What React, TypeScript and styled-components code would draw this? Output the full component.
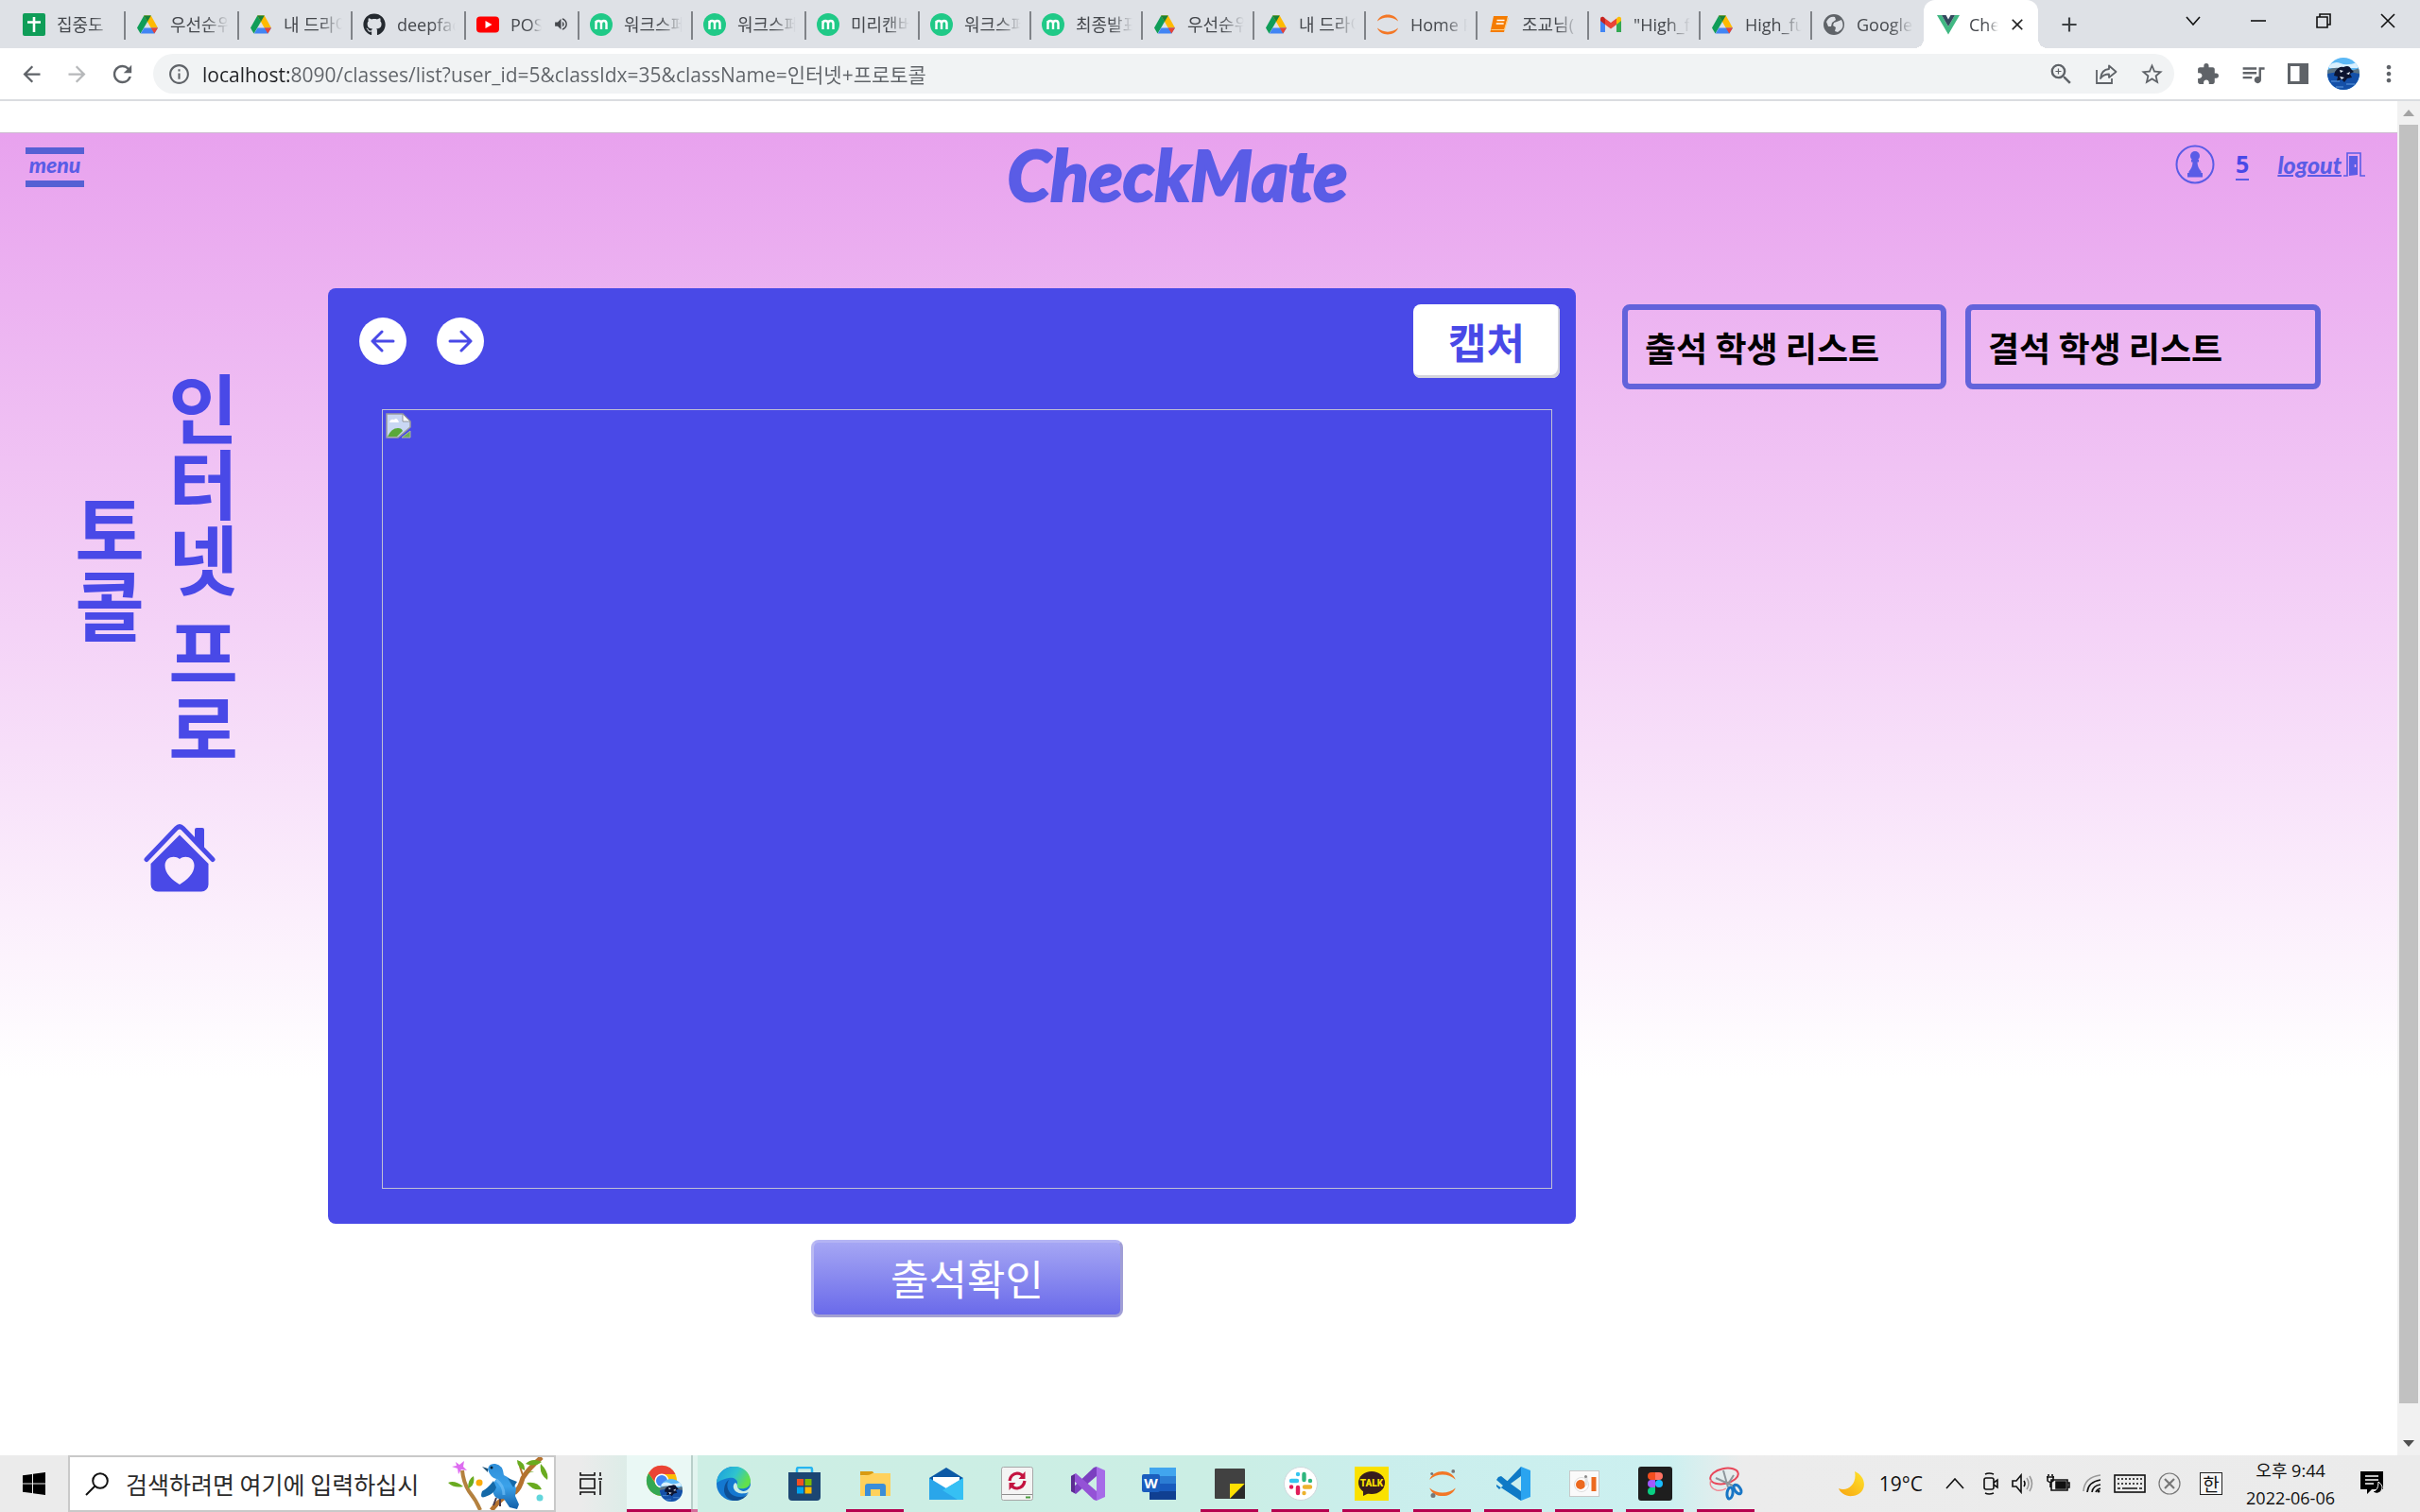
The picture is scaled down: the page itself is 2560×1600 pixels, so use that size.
import React from "react";
import styled, { createGlobalStyle, css } from "styled-components";
import { FaGithub } from "react-icons/fa";
import {
  MdExtension,
  MdQueueMusic,
  MdStarBorder,
  MdZoomIn,
  MdRefresh,
  MdArrowBack,
  MdArrowForward,
  MdInfoOutline,
  MdVolumeUp,
  MdPublic,
  MdMoreVert,
  MdClose,
  MdAdd,
} from "react-icons/md";

const sans = `"Open Sans", "Noto Sans CJK KR", sans-serif`;
const korean = `"Noto Sans CJK KR", "Noto Sans", sans-serif`;
const indigo = "#4949e7";
const brand = "#5a5ce6";

const GlobalStyle = createGlobalStyle`
  *, *::before, *::after { box-sizing: border-box; }
  html, body { margin: 0; padding: 0; }
  body { font-family: ${sans}; background: #fff; color: #202124; }
  button { font: inherit; border: 0; padding: 0; margin: 0; background: none; color: inherit; cursor: pointer; }
  input { font: inherit; border: 0; padding: 0; margin: 0; background: none; outline: none; }
  h1, h2, p { margin: 0; }
  a { color: inherit; text-decoration: none; }
  svg { display: block; flex: none; }
`;

const Shell = styled.div`
  display: flex;
  flex-direction: column;
  height: 100vh;
  overflow: hidden;
`;

/* ---------- browser tabs ---------- */

const TabStrip = styled.nav`
  display: flex;
  height: 51px;
  padding-left: 13px;
  background: #dee1e6;
  flex: none;
`;

const TabButton = styled.button<{ $width: number; $active?: boolean; $divider?: boolean }>`
  position: relative;
  display: flex;
  align-items: center;
  gap: 12px;
  flex: 0 1 ${(p) => p.$width}px;
  min-width: 0;
  padding: 0 11px;
  color: #45484d;
  font-size: 18px;
  ${(p) =>
    p.$divider &&
    css`
      &::after {
        content: "";
        position: absolute;
        right: 0;
        top: 12px;
        width: 2px;
        height: 30px;
        background: #808388;
      }
    `}
  ${(p) =>
    p.$active &&
    css`
      background: #fff;
      border-radius: 12px 12px 0 0;
      gap: 10px;
      padding: 0 12px 0 14px;
      &::before,
      &::after {
        content: "";
        position: absolute;
        bottom: 0;
        width: 10px;
        height: 10px;
      }
      &::before {
        left: -10px;
        background: radial-gradient(circle at 0 0, transparent 10px, #fff 10px);
      }
      &::after {
        right: -10px;
        background: radial-gradient(circle at 100% 0, transparent 10px, #fff 10px);
      }
    `}
`;

const TabTitle = styled.span`
  flex: 1;
  min-width: 0;
  overflow: hidden;
  white-space: nowrap;
  text-align: left;
  line-height: 26px;
  mask-image: linear-gradient(to right, #000 60%, transparent);
`;

const NewTab = styled.button`
  display: grid;
  place-items: center;
  width: 50px;
  margin-left: 8px;
  color: #3c4043;
`;

const WindowButtons = styled.div`
  display: flex;
  margin-left: auto;
`;

const WindowButton = styled.button`
  display: grid;
  place-items: center;
  width: 69px;
  height: 44px;
  &:last-child {
    width: 68px;
  }
`;

/* ---------- address bar ---------- */

const AddressRow = styled.div`
  display: flex;
  align-items: center;
  height: 56px;
  padding: 0 9px;
  border-bottom: 2px solid #dadce0;
  background: #fff;
  color: #5f6368;
  flex: none;
`;

const IconButton = styled.button<{ $faded?: boolean }>`
  display: grid;
  place-items: center;
  width: 48px;
  height: 42px;
  opacity: ${(p) => (p.$faded ? 0.45 : 1)};
`;

const Omnibox = styled.form`
  display: flex;
  align-items: center;
  flex: 1;
  height: 42px;
  margin: 0 0 0 9px;
  padding: 0 0 0 15px;
  border-radius: 21px;
  background: #f1f3f4;
`;

const UrlInput = styled.input`
  flex: 1;
  min-width: 0;
  height: 36px;
  margin-left: 12px;
  font-family: ${sans};
  font-size: 21px;
  background: linear-gradient(to right, #202124 92px, #5f6368 92px);
  background-clip: text;
  -webkit-background-clip: text;
  -webkit-text-fill-color: transparent;
`;

const Actions = styled.div`
  display: flex;
  align-items: center;
  margin-left: 11px;
`;

/* ---------- page ---------- */

const Viewport = styled.div`
  display: flex;
  flex: 1;
  min-height: 0;
`;

const Page = styled.main`
  flex: 1;
  min-width: 0;
  padding-top: 33px;
  overflow: hidden;
`;

const Stage = styled.div`
  border-top: 1px solid #cdb9d0;
  min-height: 100%;
  background: linear-gradient(to bottom, #e8a2ee 0, #fff 1000px);
`;

const Header = styled.header`
  display: grid;
  grid-template-columns: 1fr auto 1fr;
  align-items: start;
  padding: 12px 34px 0 27px;
  height: 164px;
`;

const MenuButton = styled.button`
  justify-self: start;
  width: 62px;
  height: 42px;
  margin-top: 3px;
  padding-bottom: 6px;
  border-top: 7px solid #5560d4;
  border-bottom: 7px solid #5560d4;
  color: ${brand};
  font-family: Lato, sans-serif;
  font-size: 23px;
  font-style: italic;
  font-weight: 900;
  line-height: 22px;
`;

const Logo = styled.a`
  padding-right: 38px;
  color: ${brand};
  font-family: Lato, sans-serif;
  font-size: 74px;
  font-style: italic;
  font-weight: 900;
  line-height: 64px;
  -webkit-text-stroke: 2px ${brand};
`;

const Account = styled.div`
  display: flex;
  align-items: center;
  justify-self: end;
  height: 42px;
  color: ${brand};
`;

const UserLink = styled.a`
  margin: 0 30px 0 22px;
  border-bottom: 2px solid ${brand};
  color: ${indigo};
  font-size: 25px;
  font-weight: 700;
  line-height: 32px;
`;

const LogoutLink = styled.a`
  display: flex;
  align-items: center;
  gap: 2px;
  font-family: Lato, sans-serif;
  font-size: 25px;
  font-style: italic;
  font-weight: 900;
  line-height: 30px;
  span {
    text-decoration: underline;
    text-decoration-thickness: 2px;
  }
`;

const Columns = styled.div`
  display: grid;
  grid-template-columns: 347fr 1320fr 869fr;
  align-items: start;
`;

const Side = styled.aside`
  display: flex;
  flex-direction: column;
  align-items: center;
  gap: 50px;
  padding: 77px 0 0 33px;
  color: ${indigo};
`;

const ClassTitle = styled.h1`
  height: 440px;
  margin-right: 50px;
  writing-mode: vertical-rl;
  text-align: center;
  font-family: ${korean};
  font-size: 80px;
  font-weight: 700;
  line-height: 99px;
`;

const Panel = styled.section`
  padding: 17px 17px 37px 33px;
  border-radius: 8px;
  background: ${indigo};
`;

const PanelBar = styled.div`
  display: flex;
  align-items: center;
  gap: 32px;
`;

const RoundButton = styled.button`
  display: grid;
  place-items: center;
  width: 50px;
  height: 50px;
  border-radius: 50%;
  background: #fff;
  color: ${indigo};
`;

const CaptureButton = styled.button`
  width: 155px;
  height: 78px;
  margin-left: auto;
  border-radius: 8px;
  background: #fff;
  box-shadow: inset -2px -3px 0 #d4d4dc;
  color: ${indigo};
  font-family: ${korean};
  font-size: 44px;
  font-weight: 700;
  line-height: 70px;
`;

const Capture = styled.div`
  margin: 33px 8px 0 24px;
  padding: 3px;
  border: 1px solid #c0c0d4;
  aspect-ratio: 3 / 2;
`;

const CheckRow = styled.div`
  display: flex;
  justify-content: center;
  padding: 17px 25px 0 57px;
`;

const CheckButton = styled.button`
  width: 330px;
  height: 82px;
  padding-bottom: 3px;
  border: 3px solid;
  border-color: #b4b4f4 #a09ed6 #a3a0d2 #b9b9f2;
  border-radius: 8px;
  background: linear-gradient(to bottom, #a5a6f4, #6a6aea);
  color: #fff;
  font-family: ${korean};
  font-size: 44px;
  line-height: 70px;
`;

const Lists = styled.section`
  display: grid;
  grid-template-columns: 343fr 376fr;
  gap: 20px;
  padding: 17px 81px 0 49px;
`;

const ListBox = styled.div`
  padding: 0 18px;
  border: 6px solid #6363db;
  border-radius: 8px;
`;

const ListTitle = styled.h2`
  color: #000;
  font-family: ${korean};
  font-size: 36px;
  font-weight: 700;
  line-height: 78px;
  white-space: nowrap;
`;

const Scrollbar = styled.div`
  display: flex;
  flex-direction: column;
  width: 24px;
  padding: 0 2px;
  background: #f1f1f1;
`;

const ScrollArrow = styled.button`
  display: grid;
  place-items: center;
  height: 25px;
  flex: none;
`;

const ScrollThumb = styled.div`
  flex: 1353;
  background: #c1c1c1;
`;

const ScrollRest = styled.div`
  flex: 30;
`;

/* ---------- taskbar ---------- */

const Taskbar = styled.footer`
  display: flex;
  height: 60px;
  flex: none;
  background: linear-gradient(
    to right,
    #ebebeb 0,
    #ebebeb 24%,
    #cdeee4 28%,
    #cbeee4 50%,
    #caeeec 57%,
    #ccf0f0 69%,
    #ececec 72%,
    #ebebeb 100%
  );
`;

const StartButton = styled.button`
  display: grid;
  place-items: center;
  width: 72px;
`;

const SearchBox = styled.form`
  display: flex;
  align-items: center;
  width: 516px;
  padding-left: 16px;
  border: 2px solid #c9c9c9;
  background: #fff;
`;

const SearchInput = styled.input`
  flex: 1;
  min-width: 0;
  height: 48px;
  margin-left: 18px;
  font-family: ${korean};
  font-size: 25px;
  &::placeholder {
    color: #2b2b2b;
    opacity: 1;
  }
`;

const AppButton = styled.button<{ $open?: boolean; $active?: boolean }>`
  position: relative;
  display: grid;
  place-items: center;
  width: 75px;
  ${(p) =>
    p.$active &&
    css`
      background: linear-gradient(to right, #eaf8f5 68px, #b9cfca 68px, #b9cfca 70px, #e2f4ef 70px);
    `}
  ${(p) =>
    (p.$open || p.$active) &&
    css`
      &::after {
        content: "";
        position: absolute;
        left: ${p.$active ? 0 : 7}px;
        right: ${p.$active ? 0 : 7}px;
        bottom: 0;
        height: 3px;
        background: ${p.$active ? "linear-gradient(to right, #b5004f 68px, #d56c9b 68px)" : "#b5004f"};
      }
    `}
`;

const Tray = styled.div`
  display: flex;
  align-items: center;
  margin-left: auto;
  padding-right: 38px;
  color: #111;
`;

const Weather = styled.button`
  display: flex;
  align-items: center;
  gap: 15px;
  margin-right: 24px;
  font-size: 21px;
`;

const TrayIcons = styled.div`
  display: flex;
  align-items: center;
  gap: 13px;
`;

const Language = styled.button`
  width: 24px;
  height: 24px;
  margin: 0 25px 0 20px;
  border: 1px solid #222;
  background: #f6f6f6;
  font-family: ${korean};
  font-size: 19px;
  line-height: 20px;
`;

const Clock = styled.button`
  margin-right: 27px;
  padding-top: 2px;
  font-size: 18px;
  line-height: 29px;
  text-align: center;
`;

/* ---------- favicons ---------- */

const SheetsIcon = () => (
  <svg width="24" height="24" viewBox="0 0 24 24">
    <rect width="24" height="24" rx="2" fill="#0f9d58" />
    <path d="M12 4v16M5 9.500h14" stroke="#fff" strokeWidth="2.600" />
  </svg>
);

const DriveIcon = () => (
  <svg width="24" height="24" viewBox="0 0 24 24">
    <path d="M8.300 2.500h7.400L7 17.500 4.500 21.500 1 15.500z" fill="#0f9d58" />
    <path d="M8.300 2.500h7.400L23 15.500h-7.300z" fill="#ffba00" />
    <path d="M4.800 21.500 8.500 15.500H23l-3.700 6z" fill="#4285f4" />
    <path d="M19.300 21.500 15.700 15.500H23z" fill="#ea4335" />
    <path d="M12 9 8.300 2.500h7.400z" fill="#188038" />
  </svg>
);

const YoutubeIcon = () => (
  <svg width="24" height="24" viewBox="0 0 24 24">
    <rect y="3.500" width="24" height="17" rx="4" fill="#f00" />
    <path d="M9.500 8v8l7-4z" fill="#fff" />
  </svg>
);

const MiroIcon = () => (
  <svg width="24" height="24" viewBox="0 0 24 24">
    <circle cx="12" cy="12" r="12" fill="#20c987" />
    <path
      d="M6.500 17V8M6.500 11c0-4 5.500-4 5.500 0v6M12 11c0-4 5.500-4 5.500 0v6"
      fill="none"
      stroke="#fff"
      strokeWidth="2.400"
    />
  </svg>
);

const JupyterIcon = ({ size = 24, dots = false }: { size?: number; dots?: boolean }) => (
  <svg width={size} height={size} viewBox="0 0 24 24">
    <path d="M1 8.500C4-.8 20-.8 23 8.500 17 3 7 3 1 8.500z" fill="#f37726" />
    <path d="M1 15.500c3 9.300 19 9.300 22 0-6 5.500-16 5.500-22 0z" fill="#f37726" />
    {dots && (
      <g fill="#767677">
        <circle cx="21" cy="1.500" r="1.500" />
        <circle cx="3" cy="3.500" r="1.200" />
        <circle cx="4" cy="22" r="2" />
      </g>
    )}
  </svg>
);

const BookIcon = () => (
  <svg width="24" height="24" viewBox="0 0 24 24">
    <path d="M6 3h15l-4 17H2.500z" fill="#f57c00" />
    <path d="M9.500 7.500h8M8.700 11h8" stroke="#fff" strokeWidth="1.500" />
    <path d="M3.500 17.500h14L21.500 5" fill="none" stroke="#ffcc80" strokeWidth="1.200" />
  </svg>
);

const GmailIcon = () => (
  <svg width="24" height="24" viewBox="0 0 24 24">
    <path d="M1 6v14h5V10z" fill="#4285f4" />
    <path d="M23 6v14h-5V10z" fill="#34a853" />
    <path d="M18 5.500V12l5-4V6c0-2.500-3-3-5-.5z" fill="#fbbc04" />
    <path d="M6 5.500 12 10l6-4.500V12l-6 4.500L6 12z" fill="#ea4335" />
    <path d="M1 6v2l5 4V5.500C4 3 1 3.500 1 6z" fill="#c5221f" />
  </svg>
);

const GlobeIcon = () => (
  <svg width="24" height="24" viewBox="0 0 24 24">
    <circle cx="12" cy="12" r="11" fill="#5f6368" />
    <path d="M4 9q3-6 9-5l1 3-4 3-1 4-3 0zM15 9l5-2q3 6 0 10l-4 3-3-1 1-4-3-2 1-3z" fill="#dee1e6" />
  </svg>
);

const VueIcon = () => (
  <svg width="24" height="24" viewBox="0 0 24 24">
    <path d="M0 2h5l7 12 7-12h5L12 22.500z" fill="#41b883" />
    <path d="M5 2h4.500L12 6.500 14.500 2H19l-7 12z" fill="#34495e" />
  </svg>
);

/* ---------- toolbar and page drawings ---------- */

const ShareIcon = () => (
  <svg width="24" height="24" viewBox="0 0 24 24" fill="none" stroke="currentColor" strokeWidth="1.800">
    <path d="M2 8v14h16v-5" />
    <path d="M15 3.500 22.500 10 15 16v-3.500c-4.500 0-7 1.500-9 4.500.5-5.500 3.500-9.500 9-10z" strokeLinejoin="round" />
  </svg>
);

const SidePanelIcon = () => (
  <svg width="22" height="22" viewBox="0 0 22 22" fill="none" stroke="currentColor">
    <rect x="1.500" y="1.500" width="19" height="19" strokeWidth="3" />
    <path d="M16 1v20" strokeWidth="7" />
  </svg>
);

const AvatarIcon = ({ size }: { size: number }) => (
  <svg width={size} height={size} viewBox="0 0 34 34">
    <defs>
      <clipPath id={`avatar-${size}`}>
        <circle cx="17" cy="17" r="17" />
      </clipPath>
    </defs>
    <g clipPath={`url(#avatar-${size})`}>
      <rect width="34" height="34" fill="#5cb8f5" />
      <path d="M2 8q6-5 12-2t18-1v6H2z" fill="#d9f0ff" />
      <path d="M0 13q9-4 17-1t17-1v9H0z" fill="#5b7486" />
      <path d="M0 17q17-4 34 0v17H0z" fill="#1450a8" />
      <path d="M8 15q4-6 9-5 6-3 8 2l3 3-4 2 2 4-5 1-3 4-3-3-5 2 1-5-4-1z" fill="#0c1430" />
      <path d="M13 13l4 1-3 2zM20 17l4-2-1 3zM13 20l5 1-3 2z" fill="#e8f1fa" />
      <path d="M4 25h9M20 28h9M9 31h8" stroke="#5e9be0" />
    </g>
  </svg>
);

const PawnIcon = () => (
  <svg width="42" height="42" viewBox="0 0 42 42" fill={brand}>
    <circle cx="21" cy="21" r="19.500" fill="none" stroke={brand} strokeWidth="2" />
    <circle cx="21" cy="12" r="5" />
    <path d="M17 16h8v2.500h-1.500c0 4 1.500 7 4 10v1.500h1.500v4.500H13V30h1.500v-1.500c2.500-3 4-6 4-10H17z" />
  </svg>
);

const DoorIcon = () => (
  <svg width="23" height="28" viewBox="0 0 23 28" fill="none" stroke={brand} strokeWidth="1.600">
    <path d="M0 26h4V2h14v24h5" />
    <path d="M6 5l9 0v20l-9 1z" fill={brand} stroke="none" />
    <path d="M12.500 14v3" stroke="#eaa9ef" />
  </svg>
);

const HouseIcon = () => (
  <svg width="76" height="72" viewBox="0 0 76 72" fill="currentColor">
    <path d="M54 6a2 2 0 0 1 2-2h6a2 2 0 0 1 2 2v22L54 19z" />
    <path d="M3 37.500 34.500 4.500q3.500-3.500 7 0L73 37.500" fill="none" stroke="currentColor" strokeWidth="5" strokeLinecap="round" />
    <path
      fillRule="evenodd"
      d="M38 11.500 68.500 42v22a7.500 7.500 0 0 1-7.500 7.500H15A7.500 7.500 0 0 1 7.500 64V42zM38 64c8-5 15.500-11.500 15.500-20 0-9-10-11.500-15.500-7-5.500-4.500-15.500-2-15.500 7 0 8.500 7.500 15 15.500 20z"
    />
  </svg>
);

const ArrowIcon = ({ right }: { right?: boolean }) => (
  <svg width="26" height="26" viewBox="0 0 26 26" fill="none" stroke="currentColor" strokeWidth="3" strokeLinecap="round" strokeLinejoin="round">
    {right ? <path d="M2 13h22M14 3l10 10-10 10" /> : <path d="M24 13H2M12 3 2 13l10 10" />}
  </svg>
);

const BrokenImageIcon = () => (
  <svg width="27" height="27" viewBox="0 0 27 27">
    <path d="M1 1h17l8 8v6L13 26H1z" fill="#c9d7f3" stroke="#9a9da0" strokeWidth="1.500" />
    <path d="M18 1v8h8z" fill="#fff" stroke="#8f9498" />
    <path d="M4 10q1-4 5-3 3-3 5 3z" fill="#fff" />
    <path d="M2 25q4-9 11-9 4 0 5 3l-6 6z" fill="#5aa83a" />
    <path d="M17 26l9-7v7z" fill="#6bae55" stroke="#a9b5a0" />
  </svg>
);

/* ---------- taskbar drawings ---------- */

const WindowsIcon = () => (
  <svg width="24" height="24" viewBox="0 0 24 24">
    <path d="M0 3.300 10 2v9.500H0zM11 1.800 24 0v11.500H11zM0 12.500h10V22L0 20.700zM11 12.500h13V24l-13-1.800z" />
  </svg>
);

const SearchIcon = () => (
  <svg width="25" height="25" viewBox="0 0 25 25" fill="none" stroke="#111" strokeWidth="2">
    <circle cx="16" cy="9" r="7.800" />
    <path d="M10.500 14.500 1 24" />
  </svg>
);

const BirdIcon = () => (
  <svg width="112" height="56" viewBox="0 0 112 56">
    <defs>
      <linearGradient id="bird" x1="0" y1="0" x2="0" y2="1">
        <stop offset="0" stopColor="#2f8ed8" />
        <stop offset=".5" stopColor="#3ba2ea" />
        <stop offset="1" stopColor="#125fa8" />
      </linearGradient>
    </defs>
    <path d="M15 14q1 12 7 22 8 10 12 20" fill="none" stroke="#b4813f" strokeWidth="4" />
    <path d="M46 56q10-14 25-19 5-4 8-15 6-10 20-22" fill="none" stroke="#b4722f" strokeWidth="5" />
    <path d="M80 22 76 10" stroke="#b4722f" strokeWidth="2" />
    <path d="M0 27q7-3 16 4-10 2-16-4zM21 33q0-10 6-13 2 10-6 13zM73 3q9 3 8 11-8-3-8-11zM82 7q7-7 17-2-7 6-17 2zM98 7q9 9 7 17-9-6-7-17zM83 27q12-2 16 7-9 2-16-7zM83 16q5 1 8-1" fill="#6aab20" />
    <path d="M8 5l4 3 5-4-1 6 4 4-6-1-3 5-1-6-6-2 5-1z" fill="#dd6cf0" />
    <circle cx="33" cy="27" r="3.500" fill="#fbaa0a" />
    <circle cx="97" cy="43" r="3.500" fill="#63d6dc" />
    <path d="M55 44v8M51 43l-3 8" stroke="#4a3a4a" strokeWidth="2" />
    <path d="M42 13q1-7 8-6 8 1 9 12 10 4 13 14l-1 8 4 9-2 5-8-2-6-9q-12 2-12-12 0-4 4-9-6-1-9-10z" fill="url(#bird)" />
    <path d="M42 12 36 10l6 6z" fill="#1c4f73" />
    <path d="M48 25q-6 8-12 11-3 8 3 6 10-3 12-10zM63 22l10 4-4 6z" fill="#1469a8" />
    <circle cx="46" cy="11" r="1.500" fill="#062035" />
    <path d="M51 24q8 6 8 16" stroke="#79c5fa" strokeWidth="3" fill="none" opacity=".6" />
  </svg>
);

const TaskViewIcon = () => (
  <svg width="25" height="24" viewBox="0 0 25 24" fill="none" stroke="#111" strokeWidth="1.600">
    <path d="M1 7h15v10H1zM1 0v3h15V0M1 24v-3h15v3M22 0v4M22 9v15M20 7h4" />
  </svg>
);

const ChromeIcon = () => (
  <svg width="44" height="40" viewBox="-4 0 44 40">
    <circle cx="17" cy="17" r="16" fill="#fbbc05" />
    <path d="M3 9A16 16 0 0 1 31.500 10H17a7 7 0 0 0-6.500 9z" fill="#ea4335" />
    <path d="M3 9a16 16 0 0 0 13 24l7-13a7 7 0 0 1-12.500 0z" fill="#34a853" />
    <circle cx="17" cy="17" r="7.500" fill="#fff" />
    <circle cx="17" cy="17" r="6" fill="#4285f4" />
    <g transform="translate(15 15)">
      <AvatarIcon size={24} />
    </g>
  </svg>
);

const EdgeIcon = () => (
  <svg width="36" height="36" viewBox="0 0 36 36">
    <defs>
      <linearGradient id="edge-top" x1="0" y1="0" x2="1" y2=".4">
        <stop offset="0" stopColor="#1a9be0" />
        <stop offset=".6" stopColor="#2fc3cf" />
        <stop offset="1" stopColor="#62e04c" />
      </linearGradient>
    </defs>
    <circle cx="18" cy="18" r="18" fill="#1478d0" />
    <path d="M0 17C2-5 34-6 36 15c0 7-6 9-12 8-4-1-2-3-2-6 0-4-5-6-9-5C7 13 2 16 0 17z" fill="url(#edge-top)" />
    <path d="M13 14c-5 9 2 19 13 18 4 0 6-2 8-4-8 12-24 10-26-2 0-6 2-10 5-12z" fill="#0d4f95" />
    <path d="M36 20c-2 6-9 8-16 4 0 3 8 6 14 3l2 3v-5z" fill="#cdeee6" />
    <path d="M20 17c-3 2-3 6 0 9 5 4 11 2 14 0-5 1-10-1-11-3-2-2 0-4-3-6z" fill="#cdeee6" />
  </svg>
);

const StoreIcon = () => (
  <svg width="36" height="36" viewBox="0 0 36 36">
    <path d="M10 7V3q0-2 2-2h12q2 0 2 2v4" fill="none" stroke="#27b5f0" strokeWidth="2.500" />
    <path d="M1 6h34v26q0 4-4 4H5q-4 0-4-4z" fill="#1c4673" />
    <path d="M10 13h7v7h-7z" fill="#f25022" />
    <path d="M18.500 13h7v7h-7z" fill="#7fba00" />
    <path d="M10 21.500h7v7h-7z" fill="#00a4ef" />
    <path d="M18.500 21.500h7v7h-7z" fill="#ffb900" />
  </svg>
);

const FolderIcon = () => (
  <svg width="34" height="28" viewBox="0 0 34 28">
    <path d="M1 1h13l3 4H1z" fill="#d99b12" />
    <path d="M1 5q9 1 13-2h19v24H1z" fill="#ffd15c" />
    <path d="M6 27V17q0-3 3-3h16q3 0 3 3v10h-6v-7H12v7z" fill="#3a8ed8" />
  </svg>
);

const MailIcon = () => (
  <svg width="36" height="34" viewBox="0 0 36 34">
    <path d="M0 11 18 0l18 11v3H0z" fill="#0d5aa6" />
    <path d="M4 10h28v14H4z" fill="#fff" />
    <path d="M0 11l18 11 18-11v23H0z" fill="#2aa6ea" />
    <path d="M36 11 14 24l16 10h6z" fill="#36c0f4" />
  </svg>
);

const SyncIcon = () => (
  <svg width="34" height="36" viewBox="0 0 34 36">
    <rect x=".5" y=".5" width="33" height="35" rx="2" fill="#f4f4f4" stroke="#a7a7a7" />
    <path d="M1 29.500h32" stroke="#8f8f8f" />
    <path d="M26 32.500h5" stroke="#4c9d3f" strokeWidth="2" />
    <path d="M9 15q1-7 8-8 4 0 7 4M25 15q-1 7-8 8-4 0-7-4" fill="none" stroke="#c3123f" strokeWidth="3.200" />
    <path d="M25.500 5v8h-7zM8.500 25v-8h7z" fill="#c3123f" />
  </svg>
);

const VisualStudioIcon = () => (
  <svg width="36" height="36" viewBox="0 0 36 36">
    <path d="M27 0l9 4v28l-9 4z" fill="#a66be8" />
    <path d="M27 0v10L5 29l-5-3 1-3L24 1z" fill="#7b3fc0" />
    <path d="M27 36V26L5 7 0 10l1 3 23 22z" fill="#9452d6" />
    <path d="M0 10l4-2v20l-4-2z" fill="#5c2d91" />
  </svg>
);

const WordIcon = () => (
  <svg width="36" height="34" viewBox="0 0 36 34">
    <path d="M8 0h28v9H8z" fill="#41a5ee" />
    <path d="M8 9h28v8H8z" fill="#2b7cd3" />
    <path d="M8 17h28v8H8z" fill="#185abd" />
    <path d="M8 25h28v9H8z" fill="#103f91" />
    <rect y="7" width="19" height="19" rx="2" fill="#1a5dbe" />
    <text x="9.500" y="22" textAnchor="middle" fill="#fff" fontFamily="Open Sans, sans-serif" fontWeight="700" fontSize="15">W</text>
  </svg>
);

const NotesIcon = () => (
  <svg width="32" height="32" viewBox="0 0 32 32">
    <rect width="32" height="32" rx="1" fill="#414141" />
    <path d="M16 16h16L16 32z" fill="#ffdf00" />
    <path d="M32 16v16H16z" fill="#2a2a2a" />
  </svg>
);

const SlackIcon = () => (
  <svg width="36" height="36" viewBox="0 0 36 36" strokeWidth="4.400" strokeLinecap="round">
    <circle cx="18" cy="18" r="17.500" fill="#fff" stroke="#cfd8dc" strokeWidth="1" />
    <path d="M8 15h6M15 8v.1" stroke="#36c5f0" />
    <path d="M21.500 8v6M28 15h-.1" stroke="#2eb67d" />
    <path d="M28 21.500h-6M21.500 28v-.1" stroke="#ecb22e" />
    <path d="M15 28v-6M8 21.500h.1" stroke="#e01e5a" />
  </svg>
);

const TalkIcon = () => (
  <svg width="36" height="36" viewBox="0 0 36 36">
    <rect width="36" height="36" fill="#fae100" />
    <ellipse cx="18" cy="17" rx="14" ry="12" fill="#371d1e" />
    <path d="M9 24v7l8-4z" fill="#371d1e" />
    <text x="18" y="21" textAnchor="middle" fill="#fae100" fontFamily="Roboto, sans-serif" fontWeight="900" fontSize="10">TALK</text>
  </svg>
);

const CodeIcon = () => (
  <svg width="36" height="36" viewBox="0 0 36 36">
    <path d="M26 0 8 19l-5 5-3-3v-2L26 36V27L5 10l-3 1-2 3 24 21 3-4V4z" fill="#0f7ac6" />
    <path d="M26 0l10 4v28l-10 4z" fill="#2aa4f0" />
    <path d="M26 10v16l-11-8z" fill="#ccefee" />
  </svg>
);

const OrangeDataIcon = () => (
  <svg width="32" height="28" viewBox="0 0 32 28">
    <rect x=".5" y=".5" width="31" height="27" fill="#fafafa" stroke="#c9c9c9" />
    <circle cx="13" cy="15" r="7.500" fill="#fff" stroke="#ddd" />
    <circle cx="12" cy="15" r="5" fill="#ec6a1f" />
    <path d="M18 6v10" stroke="#e4e4e4" strokeWidth="3" />
    <circle cx="17.500" cy="6.500" r="1.500" fill="#888" />
    <path d="M26 7v15" stroke="#ec6a1f" strokeWidth="5" />
  </svg>
);

const FigmaIcon = () => (
  <svg width="36" height="36" viewBox="0 0 36 36">
    <rect width="36" height="36" rx="3" fill="#1e1e1e" />
    <path d="M18 6h-4a4 4 0 0 0 0 8h4z" fill="#f24e1e" />
    <path d="M18 6h4a4 4 0 0 1 0 8h-4z" fill="#ff7262" />
    <path d="M18 14h-4a4 4 0 0 0 0 8h4z" fill="#a259ff" />
    <circle cx="22" cy="18" r="4" fill="#1abcfe" />
    <path d="M18 22h-4a4 4 0 1 0 4 4z" fill="#0acf83" />
  </svg>
);

const SnipIcon = () => (
  <svg width="36" height="36" viewBox="0 0 36 36" fill="none">
    <ellipse cx="16" cy="10" rx="15" ry="8" stroke="#e8485a" strokeWidth="2" transform="rotate(-12 16 10)" />
    <path d="M2 14q-3 8 6 11 6 1 10-2" stroke="#f08a94" strokeWidth="1.500" />
    <path d="M15 4l5 18M7 12l20 9M26 9l-7 11" stroke="#8e979c" strokeWidth="2" />
    <ellipse cx="22" cy="28" rx="3" ry="6" stroke="#1976c5" strokeWidth="3" transform="rotate(8 22 28)" />
    <ellipse cx="30" cy="24" rx="3" ry="5.500" stroke="#1976c5" strokeWidth="3" transform="rotate(-35 30 24)" />
  </svg>
);

const MoonIcon = () => (
  <svg width="29" height="28" viewBox="0 0 29 28">
    <defs>
      <linearGradient id="moon" x1="1" y1="0" x2="0" y2="1">
        <stop offset="0" stopColor="#ffe42b" />
        <stop offset="1" stopColor="#f7a411" />
      </linearGradient>
    </defs>
    <path d="M18 1c14 6 13 24-2 26C9 28 3 24 1 19c9 4 20-4 17-18z" fill="url(#moon)" />
  </svg>
);

const Line = ({ w, h, children }: { w: number; h: number; children: React.ReactNode }) => (
  <svg width={w} height={h} viewBox={`0 0 ${w} ${h}`} fill="none" stroke="#111" strokeWidth="1.600">
    {children}
  </svg>
);

const TrayIconSet = () => (
  <TrayIcons>
    <Line w={26} h={12}>
      <path d="M1 11 10 1l9 10" />
    </Line>
    <Line w={18} h={24}>
      <rect x="2" y="6" width="10" height="12" rx="2" />
      <path d="M12 11l4-3v8l-4-3M3 2q4-2 9 0M3 22q4 2 9 0" />
    </Line>
    <Line w={24} h={22}>
      <path d="M1 8h4l5-6v18l-5-6H1zM13 8q2 3 0 6" />
      <path d="M16 5q4 6 0 12M19 3q5 8 0 16" stroke="#999" />
    </Line>
    <Line w={25} h={20}>
      <path d="M5 6h17v11H5zM22 9h2v5h-2M1 2v5q3 3 6 0V2M2 0v2M6 0v2M0 3h8M4 8v6" />
      <path d="M10 8h10v7H10z" fill="#111" />
    </Line>
    <Line w={20} h={20}>
      <path d="M1 18Q2 3 19 1" stroke="#999" />
      <path d="M5 19q1-11 14-13M10 19q1-7 9-8M14 19q1-3 5-4" />
      <circle cx="17" cy="18" r="1.500" fill="#111" stroke="none" />
    </Line>
    <Line w={34} h={20}>
      <rect x="1" y="1" width="32" height="18" />
      <path d="M4 5h26M4 10h26" strokeDasharray="2 2" />
      <path d="M4 15h3M9 15h16M27 15h3" />
    </Line>
    <Line w={24} h={24}>
      <circle cx="12" cy="12" r="11" stroke="#777" strokeWidth="1.200" />
      <path d="M7 7l10 10M17 7 7 17" stroke="#777" strokeWidth="2.200" />
    </Line>
  </TrayIcons>
);

const NoticeIcon = () => (
  <svg width="25" height="26" viewBox="0 0 25 26">
    <path d="M0 0h24v19H12l-5 5v-5H0z" fill="#000" />
    <path d="M5 5h14M5 9h14M5 13h9" stroke="#fff" strokeWidth="1.500" />
    <path d="M19 11q7 5 2 11-5 3-8-1 6 0 6-10z" fill="#000" stroke="#fff" />
  </svg>
);

/* ---------- data ---------- */

type TabInfo = { title: string; icon: React.ReactNode; audio?: boolean };

const tabs: TabInfo[] = [
  { title: "집중도", icon: <SheetsIcon /> },
  { title: "우선순위", icon: <DriveIcon /> },
  { title: "내 드라이", icon: <DriveIcon /> },
  { title: "deepface", icon: <FaGithub size={24} color="#24292f" /> },
  { title: "POSC", icon: <YoutubeIcon />, audio: true },
  { title: "워크스페", icon: <MiroIcon /> },
  { title: "워크스페", icon: <MiroIcon /> },
  { title: "미리캔버", icon: <MiroIcon /> },
  { title: "워크스페", icon: <MiroIcon /> },
  { title: "최종발표", icon: <MiroIcon /> },
  { title: "우선순위", icon: <DriveIcon /> },
  { title: "내 드라이", icon: <DriveIcon /> },
  { title: "Home P", icon: <JupyterIcon /> },
  { title: "조교님(", icon: <BookIcon /> },
  { title: "\"High_fu", icon: <GmailIcon /> },
  { title: "High_fun", icon: <DriveIcon /> },
  { title: "Google", icon: <GlobeIcon /> },
];

const apps: { name: string; icon: React.ReactNode; open?: boolean; active?: boolean }[] = [
  { name: "Chrome", icon: <ChromeIcon />, active: true },
  { name: "Edge", icon: <EdgeIcon /> },
  { name: "Store", icon: <StoreIcon /> },
  { name: "Explorer", icon: <FolderIcon />, open: true },
  { name: "Mail", icon: <MailIcon /> },
  { name: "Sync", icon: <SyncIcon /> },
  { name: "Visual Studio", icon: <VisualStudioIcon /> },
  { name: "Word", icon: <WordIcon /> },
  { name: "Sticky Notes", icon: <NotesIcon />, open: true },
  { name: "Slack", icon: <SlackIcon />, open: true },
  { name: "KakaoTalk", icon: <TalkIcon />, open: true },
  { name: "Jupyter", icon: <JupyterIcon size={30} dots />, open: true },
  { name: "VS Code", icon: <CodeIcon />, open: true },
  { name: "Orange", icon: <OrangeDataIcon />, open: true },
  { name: "Figma", icon: <FigmaIcon />, open: true },
  { name: "Snipping Tool", icon: <SnipIcon />, open: true },
];

const stop = (e: React.FormEvent) => e.preventDefault();

export default function App() {
  return (
    <Shell>
      <GlobalStyle />
      <TabStrip aria-label="tabs">
        {tabs.map((tab, i) => (
          <TabButton key={i} $width={i < 8 ? 120 : 118} $divider={i < tabs.length - 1}>
            {tab.icon}
            <TabTitle>{tab.title}</TabTitle>
            {tab.audio && <MdVolumeUp size={17} />}
          </TabButton>
        ))}
        <TabButton $width={121} $active>
          <VueIcon />
          <TabTitle>Che</TabTitle>
          <MdClose size={20} color="#222" />
        </TabButton>
        <NewTab aria-label="new tab">
          <MdAdd size={26} />
        </NewTab>
        <WindowButtons>
          <WindowButton aria-label="tab search">
            <Line w={16} h={10}><path d="M1 1l7 8 7-8" /></Line>
          </WindowButton>
          <WindowButton aria-label="minimize">
            <Line w={16} h={4}><path d="M0 2h16" /></Line>
          </WindowButton>
          <WindowButton aria-label="restore">
            <Line w={16} h={16}><path d="M1 4h11v11H1zM4 4V1h11v11h-3" /></Line>
          </WindowButton>
          <WindowButton aria-label="close">
            <Line w={16} h={16}><path d="M1 1l14 14M15 1 1 15" /></Line>
          </WindowButton>
        </WindowButtons>
      </TabStrip>

      <AddressRow>
        <IconButton aria-label="back"><MdArrowBack size={27} /></IconButton>
        <IconButton aria-label="forward" $faded><MdArrowForward size={27} /></IconButton>
        <IconButton aria-label="reload"><MdRefresh size={29} /></IconButton>
        <Omnibox onSubmit={stop}>
          <MdInfoOutline size={25} />
          <UrlInput
            aria-label="address"
            defaultValue="localhost:8090/classes/list?user_id=5&classIdx=35&className=인터넷+프로토콜"
          />
          <IconButton type="button" aria-label="zoom"><MdZoomIn size={29} /></IconButton>
          <IconButton type="button" aria-label="share"><ShareIcon /></IconButton>
          <IconButton type="button" aria-label="bookmark"><MdStarBorder size={27} /></IconButton>
        </Omnibox>
        <Actions>
          <IconButton aria-label="extensions"><MdExtension size={25} /></IconButton>
          <IconButton aria-label="media"><MdQueueMusic size={29} /></IconButton>
          <IconButton aria-label="side panel"><SidePanelIcon /></IconButton>
          <IconButton aria-label="profile"><AvatarIcon size={34} /></IconButton>
          <IconButton aria-label="more"><MdMoreVert size={28} /></IconButton>
        </Actions>
      </AddressRow>

      <Viewport>
        <Page>
          <Stage>
            <Header>
              <MenuButton>menu</MenuButton>
              <Logo href="#">CheckMate</Logo>
              <Account>
                <PawnIcon />
                <UserLink href="#">5</UserLink>
                <LogoutLink href="#">
                  <span>logout</span>
                  <DoorIcon />
                </LogoutLink>
              </Account>
            </Header>
            <Columns>
              <Side>
                <ClassTitle>인터넷 프로토콜</ClassTitle>
                <a href="#" aria-label="home"><HouseIcon /></a>
              </Side>
              <div>
                <Panel>
                  <PanelBar>
                    <RoundButton aria-label="previous"><ArrowIcon /></RoundButton>
                    <RoundButton aria-label="next"><ArrowIcon right /></RoundButton>
                    <CaptureButton>캡처</CaptureButton>
                  </PanelBar>
                  <Capture><BrokenImageIcon /></Capture>
                </Panel>
                <CheckRow>
                  <CheckButton>출석확인</CheckButton>
                </CheckRow>
              </div>
              <Lists>
                <ListBox><ListTitle>출석 학생 리스트</ListTitle></ListBox>
                <ListBox><ListTitle>결석 학생 리스트</ListTitle></ListBox>
              </Lists>
            </Columns>
          </Stage>
        </Page>
        <Scrollbar>
          <ScrollArrow aria-label="scroll up">
            <svg width="12" height="7" viewBox="0 0 12 7"><path d="M0 7 6 0l6 7z" fill="#a3a3a3" /></svg>
          </ScrollArrow>
          <ScrollThumb />
          <ScrollRest />
          <ScrollArrow aria-label="scroll down">
            <svg width="12" height="7" viewBox="0 0 12 7"><path d="M0 0h12L6 7z" fill="#505050" /></svg>
          </ScrollArrow>
        </Scrollbar>
      </Viewport>

      <Taskbar>
        <StartButton aria-label="start"><WindowsIcon /></StartButton>
        <SearchBox onSubmit={stop}>
          <SearchIcon />
          <SearchInput aria-label="search" placeholder="검색하려면 여기에 입력하십시" />
          <BirdIcon />
        </SearchBox>
        <AppButton aria-label="task view"><TaskViewIcon /></AppButton>
        {apps.map((app) => (
          <AppButton key={app.name} aria-label={app.name} $open={app.open} $active={app.active}>
            {app.icon}
          </AppButton>
        ))}
        <Tray>
          <Weather>
            <MoonIcon />
            19°C
          </Weather>
          <TrayIconSet />
          <Language>한</Language>
          <Clock>
            오후 9:44
            <br />
            2022-06-06
          </Clock>
          <NoticeIcon />
        </Tray>
      </Taskbar>
    </Shell>
  );
}
